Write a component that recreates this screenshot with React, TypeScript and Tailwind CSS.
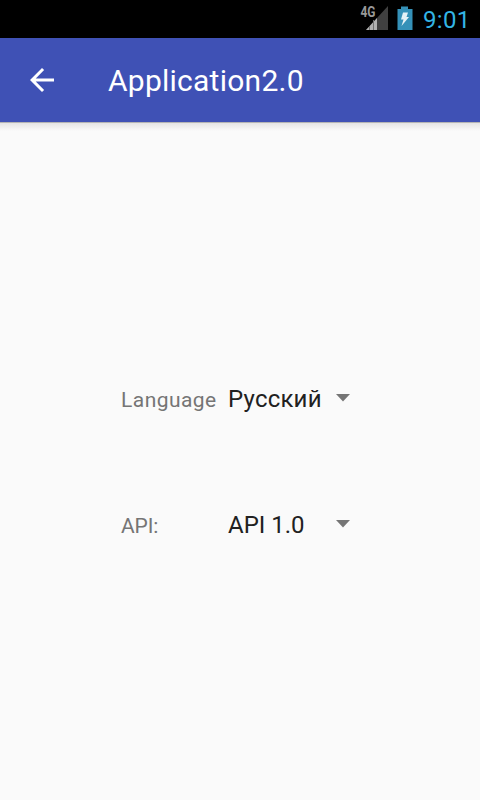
const rows = [
  { label: "Language", value: "Русский", labelSpacing: "tracking-[0.45px]", valueSpacing: "tracking-[0.2px]" },
  { label: "API:", value: "API 1.0", labelSpacing: "tracking-[-0.1px]", valueSpacing: "tracking-[0px]" },
];

function StatusBar() {
  return (
    <div className="flex h-[38px] justify-end bg-black">
      <svg width="30" height="38" viewBox="0 0 30 38" className="shrink-0">
        <path d="M28 6V30H6Z" fill="#404040" />
        <path d="M17 18V30H6Z" fill="#b0b0b0" />
        <path d="M9.5 26V30M13.5 20V30" stroke="#707070" strokeWidth="1" />
        <text transform="translate(0.5 17) scale(1 1.2)" fontSize="11.5" fontWeight="700" fontFamily="Roboto, sans-serif" fill="#999999" textLength="15" lengthAdjust="spacingAndGlyphs">4G</text>
      </svg>
      <svg width="16" height="38" viewBox="0 0 16 38" className="ml-[7px] shrink-0">
        <path d="M4 6.5h7v2.5h4.5v21H0.5V9H4Z" fill="#3591b8" />
        <path d="M6 12.5h5l-1.500 4.500h2.500l-7.500 9 2-6.500H4Z" fill="#e6f2f7" />
      </svg>
      <span className="ml-[10px] w-[57px] whitespace-nowrap pt-px text-[24px] leading-[38px] tracking-[0.3px] text-[#33b5e5]">9:01</span>
    </div>
  );
}

export default function App() {
  return (
    <div className="flex h-[800px] w-[480px] flex-col overflow-hidden bg-[#fafafa] font-[Roboto,sans-serif]">
      <StatusBar />
      <header className="flex h-[84px] shrink-0 items-center bg-[#3f51b5] text-white">
        <svg width="36" height="36" viewBox="0 0 24 24" className="ml-6" fill="currentColor">
          <path d="M20 11H7.83l5.59-5.59L12 4l-8 8 8 8 1.41-1.41L7.83 13H20v-2z" />
        </svg>
        <h1 className="ml-12 pt-[2px] text-[30px] leading-[36px] tracking-[0.25px]">Application2.0</h1>
      </header>
      <div className="h-[9px] shrink-0 border-t border-[#b4b4b4] bg-linear-to-b from-[#e4e4e4] to-[#fafafa]" />
      <main className="flex flex-col gap-[90px] pt-[250px] pl-[121px]">
        {rows.map((row) => (
          <div key={row.label} className="flex h-9 items-center">
            <span className={`w-[107px] pt-[2px] text-[21px] leading-6 text-[#757575] ${row.labelSpacing}`}>{row.label}</span>
            <span className={`w-[108px] text-[24px] leading-7 text-[#212121] ${row.valueSpacing}`}>{row.value}</span>
            <svg width="14" height="8" viewBox="0 0 14 8" className="mb-[2px]" fill="#757575">
              <path d="M0 0H14L7 7.500Z" />
            </svg>
          </div>
        ))}
      </main>
    </div>
  );
}
